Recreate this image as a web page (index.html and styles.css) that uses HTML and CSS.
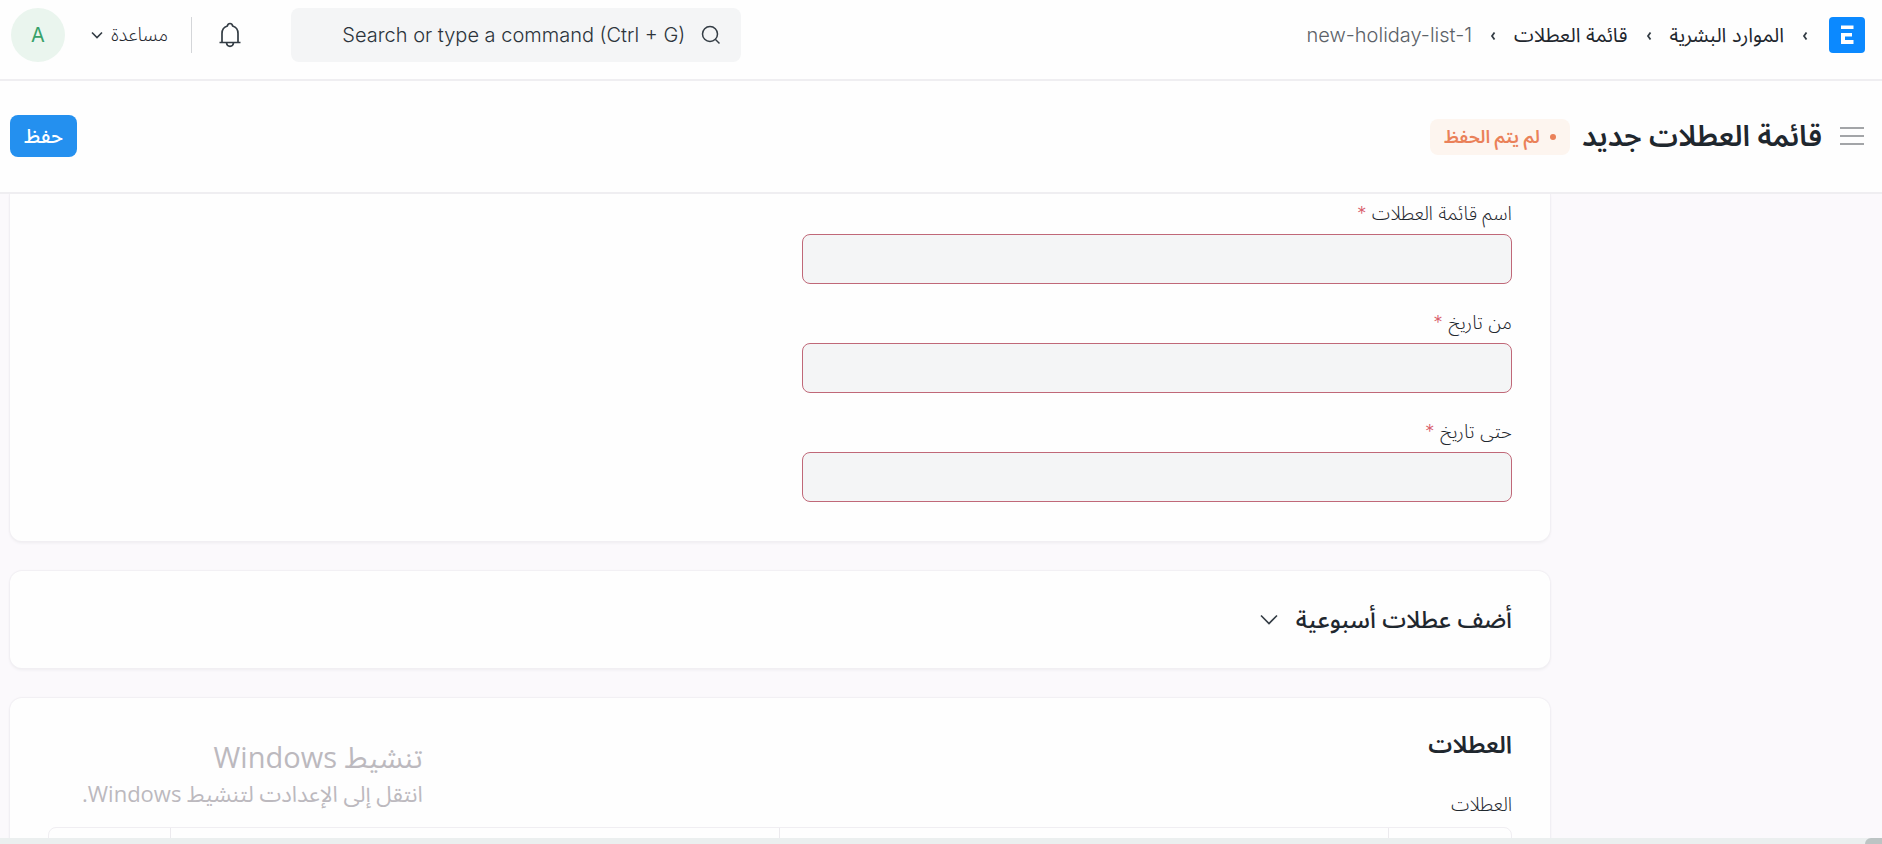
FILE: index.html
```html
<!DOCTYPE html>
<html lang="ar" dir="rtl">
<head>
<meta charset="utf-8">
<title>قائمة العطلات جديد</title>
<link rel="stylesheet" href="styles.css">
</head>
<body>
<header class="navbar">
  <nav class="breadcrumbs">
    <a class="logo" href="#" aria-label="ERPNext">
      <svg width="36" height="36" viewBox="0 0 36 36"><rect width="36" height="36" rx="4" fill="#0b89ff"/><path d="M12 8.500h12.500v3.500H12zM12 16h11v3.500h-7V23h8.500v4H12z" fill="#fff"/></svg>
    </a>
    <svg class="sep" width="6" height="10" viewBox="0 0 6 10"><path d="M4.500 2.500 2 6l2.500 3.500"/></svg>
    <a href="#">الموارد البشرية</a>
    <svg class="sep" width="6" height="10" viewBox="0 0 6 10"><path d="M4.500 2.500 2 6l2.500 3.500"/></svg>
    <a href="#">قائمة العطلات</a>
    <svg class="sep" width="6" height="10" viewBox="0 0 6 10"><path d="M4.500 2.500 2 6l2.500 3.500"/></svg>
    <a class="current" href="#" dir="ltr">new-holiday-list-1</a>
  </nav>
  <div class="tools">
    <label class="search">
      <svg width="20" height="20" viewBox="0 0 20 20"><circle cx="9" cy="9" r="7.500"/><path d="m14.500 14.500 4 4"/></svg>
      <input type="text" dir="ltr" aria-label="Search" placeholder="Search or type a command (Ctrl + G)">
    </label>
    <button class="bell" type="button" aria-label="الإشعارات">
      <svg width="22" height="26" viewBox="0 0 22 26"><path d="M.5 20.500h21M3 20.500V11.500c0-4 2.200-6.600 5.300-7.500.4-1.600 1.400-2.500 2.700-2.500s2.300.9 2.700 2.500c3.100.9 5.300 3.500 5.300 7.500v9M7.500 21c.3 2.300 1.600 3.300 3.500 3.300s3.200-1 3.500-3.300"/></svg>
    </button>
    <span class="divider"></span>
    <button class="help" type="button">مساعدة
      <svg width="12" height="8" viewBox="0 0 12 8"><path d="m1 1.500 5 5 5-5"/></svg>
    </button>
    <button class="avatar" type="button">A</button>
  </div>
</header>
<div class="page-head">
  <button class="menu" type="button" aria-label="القائمة">
    <svg width="24" height="20" viewBox="0 0 24 20"><path d="M0 2h24M0 10h24M0 18h24"/></svg>
  </button>
  <h1>قائمة العطلات جديد</h1>
  <span class="badge">لم يتم الحفظ</span>
  <button class="save" type="button">حفظ</button>
</div>
<main class="content">
  <aside class="sidebar"></aside>
  <form class="form">
    <section class="card first">
      <div class="column">
        <div class="field"><label for="name">اسم قائمة العطلات <span class="req">*</span></label><input id="name" type="text"></div>
        <div class="field"><label for="from">من تاريخ <span class="req">*</span></label><input id="from" type="text"></div>
        <div class="field"><label for="to">حتى تاريخ <span class="req">*</span></label><input id="to" type="text"></div>
      </div>
    </section>
    <section class="card collapsed">
      <h2>أضف عطلات أسبوعية</h2>
      <svg width="18" height="12" viewBox="0 0 18 12"><path d="m1 1.500 8 8 8-8"/></svg>
    </section>
    <section class="card holidays">
      <h2>العطلات</h2>
      <p class="caption">العطلات</p>
      <div class="grid"><span></span><span></span><span></span><span></span></div>
    </section>
  </form>
</main>
<div class="scrollbar"><span></span></div>
<div class="watermark">
  <div class="wm-title">تنشيط Windows</div>
  <div class="wm-text">انتقل إلى الإعدادت لتنشيط Windows.</div>
</div>
</body>
</html>
```
FILE: styles.css
```css
* { box-sizing: border-box; }
body {
  margin: 0;
  height: 100vh;
  display: flex;
  flex-direction: column;
  overflow: hidden;
  background: #fbf9fc;
  color: #1f272e;
  font-family: Inter, "Noto Sans Arabic", "DejaVu Sans", sans-serif;
  font-size: 18px;
}
button, input { font: inherit; color: inherit; }
button { border: 0; background: none; padding: 0; }
a { color: inherit; text-decoration: none; }
h1, h2, p { margin: 0; }
svg { display: block; flex: none; fill: none; stroke: #333c44; stroke-width: 2; }
.navbar {
  flex: none;
  display: flex;
  align-items: center;
  justify-content: space-between;
  height: 81px;
  padding: 0 17px 10px 11px;
  background: #fefefe;
  border-bottom: 2px solid #efeef1;
}
.breadcrumbs { display: flex; align-items: center; gap: 18px; font-size: 20px; line-height: 32px; }
.logo { margin-left: 3px; }
.logo svg { stroke: none; }
.sep { stroke-width: 1.8; }
.current { color: #5c6268; font-weight: 300; }
.tools { display: flex; align-items: center; }
.search {
  display: flex;
  align-items: center;
  gap: 16px;
  width: 450px;
  height: 54px;
  padding: 0 20px;
  border-radius: 8px;
  background: #f4f5f6;
}
.search svg { stroke-width: 1.5; }
.search input {
  flex: 1;
  min-width: 0;
  border: 0;
  padding: 0;
  background: none;
  text-align: right;
  font-size: 20px;
  font-weight: 300;
}
.search input::placeholder { color: #2c343b; opacity: 1; }
.bell { margin-right: 50px; }
.bell svg { stroke-width: 1.7; }
.divider { width: 1px; height: 36px; margin: 0 27px 0 23px; background: #d4d6d9; }
.help { display: flex; align-items: center; gap: 8px; margin-left: 26px; font-size: 19px; font-weight: 300; color: #1f272e; }
.help svg { stroke-width: 1.6; }
.avatar { width: 54px; height: 54px; border-radius: 50%; background: #eaf5ee; color: #38a169; font-size: 20px; }
.page-head {
  flex: none;
  display: flex;
  align-items: center;
  height: 113px;
  padding: 0 18px 2px 10px;
  background: #fefefe;
  border-bottom: 2px solid #efeef1;
}
.menu svg { stroke: #a3a5a8; }
h1 { margin-right: 18px; font-size: 29px; font-weight: 600; line-height: 40px; }
.badge {
  display: flex;
  align-items: center;
  gap: 10px;
  height: 36px;
  margin-top: 3px;
  margin-right: 12px;
  padding: 0 14px;
  border-radius: 8px;
  background: #fdf5ef;
  color: #ea8159;
  font-size: 18px;
  font-weight: 600;
}
.badge::before { content: ""; width: 6px; height: 6px; border-radius: 50%; background: currentColor; }
.save {
  margin-right: auto;
  height: 42px;
  padding: 0 14px;
  border-radius: 8px;
  background: #2490ef;
  color: #fff;
  font-size: 20px;
  font-weight: 500;
  line-height: 32px;
}
.content { flex: 1; min-height: 0; overflow: hidden; display: flex; padding-left: 10px; }
.sidebar { flex: none; width: 332px; }
.form { flex: 1; min-width: 0; display: flex; flex-direction: column; gap: 30px; }
.card {
  flex: none;
  padding: 0 38px;
  border-radius: 12px;
  background: #fefefe;
  box-shadow: 0 0 1px 1px #f1eff3, 0 2px 3px #eeecf0;
}
.first { display: grid; grid-template-columns: 1fr 1fr; gap: 44px; padding-top: 5px; padding-bottom: 39px; border-radius: 0 0 12px 12px; }
.column { display: flex; flex-direction: column; gap: 24px; }
.field { display: flex; flex-direction: column; }
.field label { height: 35px; line-height: 29px; font-size: 19px; font-weight: 300; color: #1f272e; }
.req { color: #d9606c; }
.field input { height: 50px; border: 1px solid #c06878; border-radius: 8px; background: #f4f5f6; padding: 0 12px; }
.collapsed { display: flex; align-items: center; gap: 18px; height: 97px; }
.collapsed svg { stroke-width: 1.6; }
h2 { font-size: 24px; font-weight: 600; line-height: 32px; }
.collapsed h2 { font-weight: 500; }
.holidays { padding-top: 31px; }
.caption { margin-top: 29px; line-height: 30px; font-size: 19px; font-weight: 300; color: #1f272e; }
.grid {
  display: grid;
  grid-template-columns: 1fr 5fr 5fr 1fr;
  height: 60px;
  margin-top: 7px;
  border: 1px solid #f0eef2;
  border-radius: 8px;
}
.grid span + span { border-right: 1px solid #eceaee; }
.scrollbar { flex: none; height: 6px; background: #ebefef; }
.scrollbar span { display: block; width: 17px; height: 6px; border-radius: 6px 0 0 0; background: #bcc4c4; }
.watermark {
  position: absolute;
  left: 82px;
  bottom: 34px;
  color: #bcb9be;
  font-family: "Open Sans", "Noto Sans Arabic", "DejaVu Sans", sans-serif;
  white-space: nowrap;
}
.wm-title { font-size: 29px; line-height: 38px; }
.wm-text { font-size: 22px; line-height: 34px; }
```
